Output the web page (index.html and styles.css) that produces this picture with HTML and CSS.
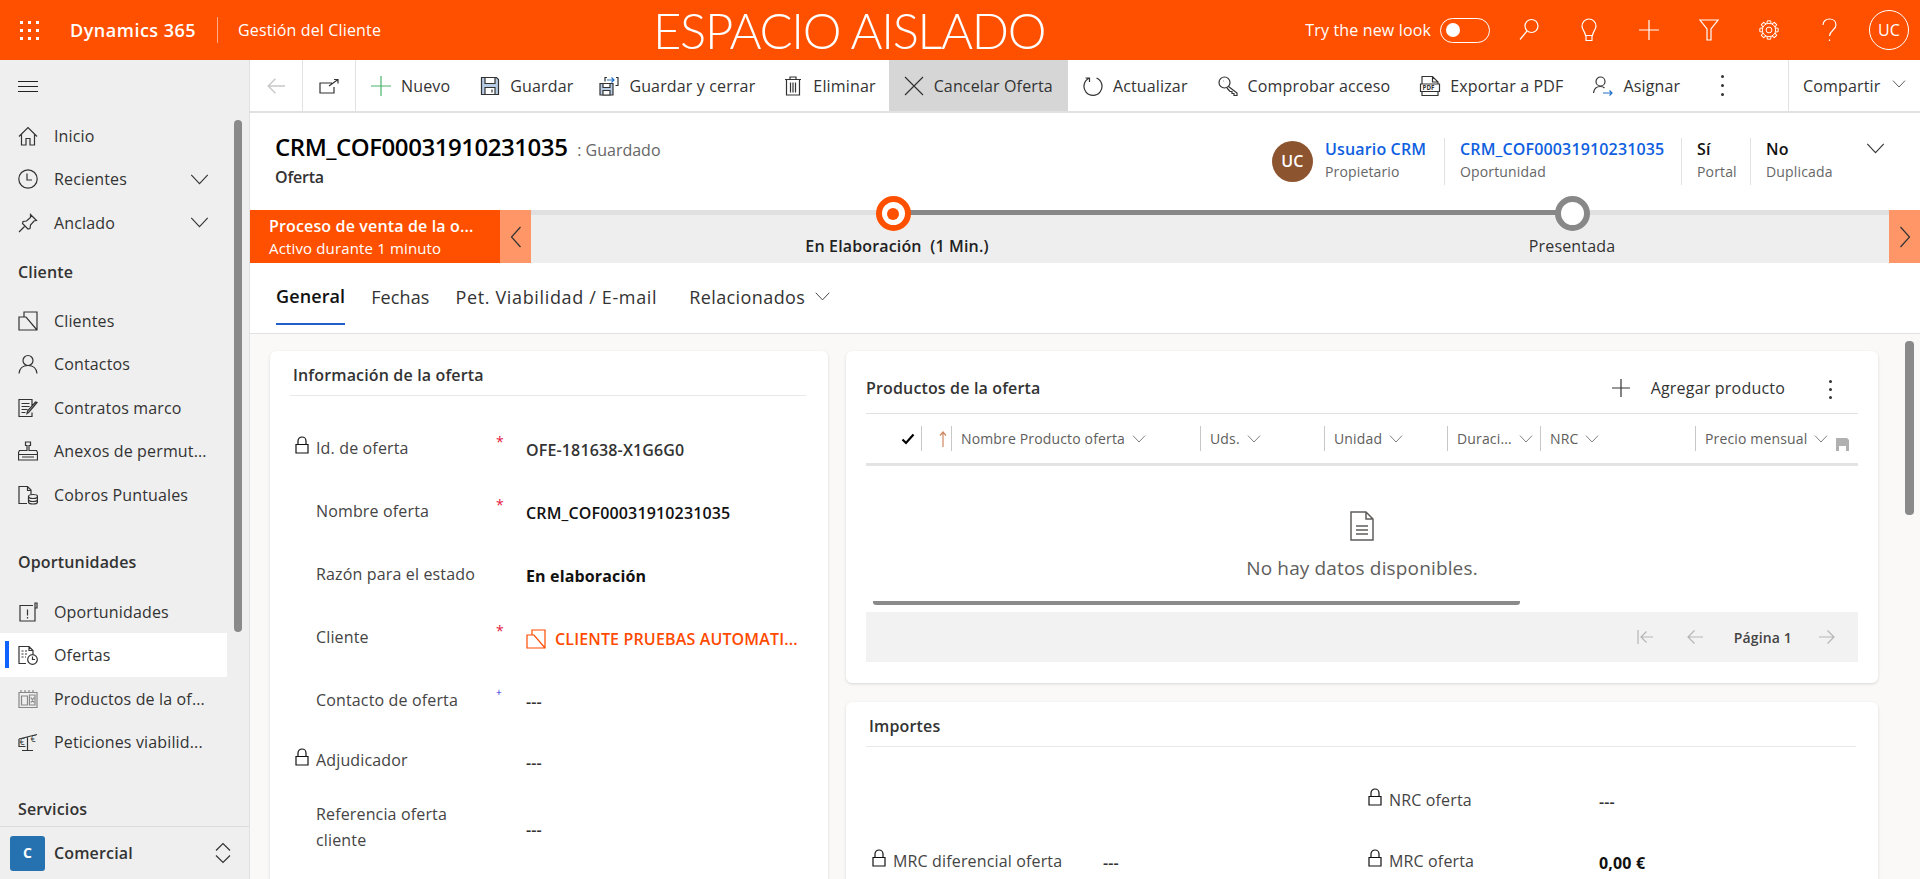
FILE: index.html
```html
<!DOCTYPE html>
<html lang="es">

<head>
    <meta charset="utf-8">
    <title>Oferta: CRM_COF00031910231035 - Dynamics 365</title>
    <link rel="stylesheet" href="styles.css">
</head>

<body>
    <svg class="defs" width="0" height="0">
        <symbol id="i-chev" viewBox="0 0 20 12"><path d="M1 1l9 9.500L19 1"/></symbol>
        <symbol id="i-plus" viewBox="0 0 20 20"><path d="M10 0v20M0 10h20"/></symbol>
        <symbol id="i-home" viewBox="0 0 20 20"><path d="M1 10.500L10 1.500l9 9M3.500 8.500V19h4.500v-6.500h4V19h4.500V8.500"/></symbol>
        <symbol id="i-clock" viewBox="0 0 20 20"><circle cx="10" cy="10" r="9.200"/><path d="M9 4.500V11h5"/></symbol>
        <symbol id="i-pin" viewBox="0 0 20 20"><path d="M12.500 1.500l6 6-2.500 .5-3.500 4-.5 3.500-2 .5-5.500-5.500.5-2 3.500-.5 4-3.500zM7 13L1 19"/></symbol>
        <symbol id="i-account" viewBox="0 0 20 20"><path d="M6 6V1h13v18H1V6h7l11 13"/></symbol>
        <symbol id="i-contact" viewBox="0 0 20 20"><circle cx="10" cy="6.500" r="5"/><path d="M1 19.500c.5-5 4-8 9-8s8.500 3 9 8"/></symbol>
        <symbol id="i-contract" viewBox="0 0 20 20"><path d="M14 7.500V1.500H1V18.500h13v-4M3.500 5.500h8M3.500 8.500h8M3.500 11.500h6M3.500 14.500h4M19 4.500l-8 9.500-2 1.500.5-2.500 8-9z"/></symbol>
        <symbol id="i-stamp" viewBox="0 0 20 20"><path d="M7.500 1h5v3.500h-1.500v5H18.500l1 2V19H.5v-7.500l1-2H9v-5H7.500zM.5 13.500h19M4 16h12"/></symbol>
        <symbol id="i-coins" viewBox="0 0 20 20"><path d="M9 18.500H1V1.500h8.500l3.500 3.500v4.500M9.500 1.500V5.500H13"/><ellipse cx="15" cy="11.500" rx="4.500" ry="2"/><path d="M10.500 11.500v5.500c0 1 2 2 4.500 2s4.500-1 4.500-2v-5.500M10.500 14.500c0 1 2 2 4.500 2s4.500-1 4.500-2"/></symbol>
        <symbol id="i-opp" viewBox="0 0 20 20"><path d="M15 3.500H2V19h15V1h2v5h-2M9.500 7.500v6M9.500 15v1.500"/></symbol>
        <symbol id="i-offer" viewBox="0 0 20 20"><path d="M8 18.500H1V1.500h10l4 4v4M11 1.500v4h4M3.500 6h2M7 6h2M3.500 9h2M7 9h2M3.500 12h2M7 12h1"/><circle cx="14.500" cy="14.500" r="4.800"/><path d="M14.500 11.500v3h2.500"/></symbol>
        <symbol id="i-product" viewBox="0 0 20 20"><path d="M1 3.500h18V18.500H1z"/><path d="M3.500 7h6v9h-6zM11.500 6h5.500v10h-5.500zM13 8.500l3 5M16 8.500l-3 5M3 1v2.500M7 1v2.500M11 1v2.500M15 1v2.500"/></symbol>
        <symbol id="i-lock" viewBox="0 0 14 18"><path d="M1 8.500h12v8.500H1zM3 8.500V5a4 4 0 0 1 8 0v3.500"/></symbol>
        <symbol id="i-save" viewBox="0 0 20 20"><path class="tint" d="M1.500 1.500h15l2 2v15h-17z"/><path class="white" d="M5 1.500h10v6H5zM5 18.500v-7h10v7z"/><path d="M12 13.500v3"/></symbol>
        <symbol id="i-saveclose" viewBox="0 0 20 20"><path class="tint" d="M1 7.500h13V19H1z"/><path class="white" d="M4 7.500h7v4H4zM4 19v-4.500h7V19z"/><path class="blue" d="M8 4h7M12.500 1.500L15 4l-2.500 2.500"/><path d="M6 5.500v-4h2M17 1.500h2v8h-2.500"/></symbol>
        <symbol id="i-trash" viewBox="0 0 20 20"><path d="M2 3.500h16M7 3.500V1h6v2.500M3.500 3.500V19h13V3.500M7.500 6.500v10M10 6.500v10M12.500 6.500v10"/></symbol>
        <symbol id="i-close" viewBox="0 0 20 20"><path d="M1 1l18 18M19 1L1 19"/></symbol>
        <symbol id="i-refresh" viewBox="0 0 20 20"><path d="M6.500 2A9 9 0 1 0 13.500 2M6.500 6V2H2.500"/></symbol>
        <symbol id="i-key" viewBox="0 0 20 20"><circle cx="6.500" cy="6.500" r="5.500"/><path d="M10.500 10.500l8.500 6.500v2.500h-3v-2h-2v-2h-2l-3-3.500M5 5h.5"/></symbol>
        <symbol id="i-assign" viewBox="0 0 20 20"><circle cx="7.500" cy="5.500" r="4.500"/><path d="M.5 17c.5-4 3-6.500 7-6.500 1.500 0 3 .5 4 1.500"/><path class="blue" d="M10 17h9M16.500 14.500L19 17l-2.500 2.500"/></symbol>
        <symbol id="i-doc" viewBox="0 0 24 30"><path d="M1 1h15l7 7v21H1zM16 1v7h7M6 15h12M6 19h12M6 23h12"/></symbol>
        <symbol id="i-first" viewBox="0 0 16 14"><path d="M1 0v14M16 7H4M9.500 1.500L4 7l5.500 5.500"/></symbol>
        <symbol id="i-back" viewBox="0 0 16 14"><path d="M16 7H1M7.500 .5L1 7l6.500 6.500"/></symbol>
        <symbol id="i-next" viewBox="0 0 16 14"><path d="M0 7h15M8.500 .5L15 7l-6.500 6.500"/></symbol>
    </svg>

    <header class="topbar">
        <span class="waffle"><i></i><i></i><i></i><i></i><i></i><i></i><i></i><i></i><i></i></span>
        <span class="brand">Dynamics 365</span>
        <span class="app-name">Gestión del Cliente</span>
        <span class="sandbox">ESPACIO AISLADO</span>
        <div class="top-tools">
            <span class="new-look">Try the new look</span>
            <span class="switch"><i></i></span>
            <svg class="top-ico" viewBox="0 0 20 24"><circle cx="12.500" cy="8" r="6.500"/><path d="M8 13L1 21.500"/></svg>
            <svg class="top-ico" viewBox="0 0 20 24"><path d="M6.500 17.500C6 13 3 12 3 8a7 7 0 0 1 14 0c0 4-3 5-3.500 9.500zM7 17.500V22.500h6v-5"/></svg>
            <svg class="top-ico"><use href="#i-plus"/></svg>
            <svg class="top-ico" viewBox="0 0 20 24"><path d="M1 2h18l-7 9v11h-4V11z"/></svg>
            <svg class="top-ico" viewBox="0 0 24 24">
                <circle cx="12" cy="12" r="3.500"/>
                <circle cx="12" cy="12" r="8"/>
                <path class="tooth" d="M9.500 4.400L10 1h4l.5 3.400"/>
                <path class="tooth" d="M9.500 4.400L10 1h4l.5 3.400" transform="rotate(45 12 12)"/>
                <path class="tooth" d="M9.500 4.400L10 1h4l.5 3.400" transform="rotate(90 12 12)"/>
                <path class="tooth" d="M9.500 4.400L10 1h4l.5 3.400" transform="rotate(135 12 12)"/>
                <path class="tooth" d="M9.500 4.400L10 1h4l.5 3.400" transform="rotate(180 12 12)"/>
                <path class="tooth" d="M9.500 4.400L10 1h4l.5 3.400" transform="rotate(225 12 12)"/>
                <path class="tooth" d="M9.500 4.400L10 1h4l.5 3.400" transform="rotate(270 12 12)"/>
                <path class="tooth" d="M9.500 4.400L10 1h4l.5 3.400" transform="rotate(315 12 12)"/>
            </svg>
            <svg class="top-ico" viewBox="0 0 20 24"><path d="M4 7c0-8 13-8 13 0 0 5-6.500 5.500-6.500 11M10.500 21.500v1.500"/></svg>
            <span class="top-user">UC</span>
        </div>
    </header>

    <div class="shell">
        <nav class="sidenav">
            <div class="nav-scroll">
                <div class="burger"><i></i><i></i><i></i></div>
                <ul class="nav-list first">
                    <li class="nav-item"><svg class="ico"><use href="#i-home"/></svg>Inicio</li>
                    <li class="nav-item"><svg class="ico"><use href="#i-clock"/></svg>Recientes<svg class="nav-chev"><use href="#i-chev"/></svg></li>
                    <li class="nav-item"><svg class="ico"><use href="#i-pin"/></svg>Anclado<svg class="nav-chev"><use href="#i-chev"/></svg></li>
                </ul>
                <h3 class="nav-head">Cliente</h3>
                <ul class="nav-list">
                    <li class="nav-item"><svg class="ico"><use href="#i-account"/></svg>Clientes</li>
                    <li class="nav-item"><svg class="ico"><use href="#i-contact"/></svg>Contactos</li>
                    <li class="nav-item"><svg class="ico"><use href="#i-contract"/></svg>Contratos marco</li>
                    <li class="nav-item"><svg class="ico"><use href="#i-stamp"/></svg>Anexos de permut...</li>
                    <li class="nav-item"><svg class="ico"><use href="#i-coins"/></svg>Cobros Puntuales</li>
                </ul>
                <h3 class="nav-head second">Oportunidades</h3>
                <ul class="nav-list">
                    <li class="nav-item"><svg class="ico"><use href="#i-opp"/></svg>Oportunidades</li>
                    <li class="nav-item active"><svg class="ico"><use href="#i-offer"/></svg>Ofertas</li>
                    <li class="nav-item"><svg class="ico faded"><use href="#i-product"/></svg>Productos de la of...</li>
                    <li class="nav-item"><svg class="ico" viewBox="0 0 20 20"><path d="M1 7L19 2.500M9.500 5v13M4 18.500h11M1 7v7.500h6.500"/><text class="ico-text" x="1.500" y="13" font-size="9">€</text><text class="ico-text" x="12.500" y="10" font-size="9">€</text></svg>Peticiones viabilid...</li>
                </ul>
                <h3 class="nav-head third">Servicios</h3>
            </div>
            <div class="nav-thumb"></div>
            <div class="area-switch">
                <span class="area-tile">C</span>
                <span class="area-name">Comercial</span>
                <svg class="area-chev" viewBox="0 0 18 22"><path d="M2 8.500L9 1.500l7 7M2 13.500l7 7 7-7"/></svg>
            </div>
        </nav>

        <main class="panel">
            <div class="cmdbar">
                <span class="cmd-nav"><svg class="ico pale"><use href="#i-back"/></svg></span>
                <span class="cmd-nav"><svg class="ico" viewBox="0 -3 20 20"><path d="M13 4H1v10h14V8M10 7L19 .5M15 .5h4v4"/></svg></span>
                <button class="cmd"><svg class="ico green"><use href="#i-plus"/></svg>Nuevo</button>
                <button class="cmd tight-a"><svg class="ico"><use href="#i-save"/></svg>Guardar</button>
                <button class="cmd tight-b"><svg class="ico"><use href="#i-saveclose"/></svg>Guardar y cerrar</button>
                <button class="cmd tight-b"><svg class="ico"><use href="#i-trash"/></svg>Eliminar</button>
                <button class="cmd on"><svg class="ico"><use href="#i-close"/></svg>Cancelar Oferta</button>
                <button class="cmd"><svg class="ico"><use href="#i-refresh"/></svg>Actualizar</button>
                <button class="cmd"><svg class="ico"><use href="#i-key"/></svg>Comprobar acceso</button>
                <button class="cmd"><svg class="ico" viewBox="0 0 20 20"><path d="M2 8V.5h10.500L18 6v2M12.500 .5V6H18M2 15.500v4h16v-4M.5 8h19v7.500H.5z"/><text class="ico-text" x="2.500" y="14.300" font-size="6.200" font-weight="700">PDF</text></svg>Exportar a PDF</button>
                <button class="cmd"><svg class="ico"><use href="#i-assign"/></svg>Asignar</button>
                <span class="cmd-more"><i></i><i></i><i></i></span>
                <div class="cmd-share">Compartir<svg class="share-chev"><use href="#i-chev"/></svg></div>
            </div>

            <section class="rec-head">
                <div class="rec-title">
                    <h1>CRM_COF00031910231035 <small>: Guardado</small></h1>
                    <p>Oferta</p>
                </div>
                <div class="rec-fields">
                    <div class="rec-field owner">
                        <span class="avatar">UC</span>
                        <div><a>Usuario CRM</a><span>Propietario</span></div>
                    </div>
                    <div class="rec-field opp"><a>CRM_COF00031910231035</a><span>Oportunidad</span></div>
                    <div class="rec-field portal"><b>Sí</b><span>Portal</span></div>
                    <div class="rec-field dup"><b>No</b><span>Duplicada</span></div>
                    <svg class="rec-chev"><use href="#i-chev"/></svg>
                </div>
            </section>

            <section class="bpf">
                <div class="bpf-name">
                    <b>Proceso de venta de la o...</b>
                    <span>Activo durante 1 minuto</span>
                </div>
                <button class="bpf-arrow"><svg viewBox="0 0 12 22"><path d="M10.500 1L1.500 11l9 10"/></svg></button>
                <div class="bpf-main">
                    <div class="bpf-track"><i class="t-a"></i><i class="t-b"></i><i class="t-c"></i></div>
                    <div class="bpf-stages">
                        <div class="stage current"><i></i><span>En Elaboración&nbsp; (1 Min.)</span></div>
                        <div class="stage"><i></i><span>Presentada</span></div>
                    </div>
                </div>
                <button class="bpf-arrow"><svg viewBox="0 0 12 22"><path d="M1.500 1l9 10-9 10"/></svg></button>
            </section>

            <div class="tabs">
                <span class="tab on">General</span>
                <span class="tab">Fechas</span>
                <span class="tab wide">Pet. Viabilidad / E-mail</span>
                <span class="tab more">Relacionados<svg class="tab-chev"><use href="#i-chev"/></svg></span>
            </div>

            <div class="content">
                <section class="card info">
                    <h2 class="card-title">Información de la oferta</h2>
                    <div class="form-row"><svg class="lock"><use href="#i-lock"/></svg><label>Id. de oferta</label><em class="req">*</em><span class="val">OFE-181638-X1G6G0</span></div>
                    <div class="form-row"><label>Nombre oferta</label><em class="req">*</em><span class="val dark">CRM_COF00031910231035</span></div>
                    <div class="form-row"><label>Razón para el estado</label><span class="val bold">En elaboración</span></div>
                    <div class="form-row"><label>Cliente</label><em class="req">*</em><span class="val link"><svg class="ico"><use href="#i-account"/></svg>CLIENTE PRUEBAS AUTOMATI...</span></div>
                    <div class="form-row"><label>Contacto de oferta</label><em class="req rec">+</em><span class="val">---</span></div>
                    <div class="form-row short"><svg class="lock"><use href="#i-lock"/></svg><label>Adjudicador</label><span class="val">---</span></div>
                    <div class="form-row tall"><label>Referencia oferta cliente</label><span class="val">---</span></div>
                </section>

                <div class="right-col">
                    <section class="card products">
                        <div class="prod-head">
                            <h2>Productos de la oferta</h2>
                            <span class="add-prod"><svg class="plus-two" viewBox="0 0 18 18"><path d="M9 0v18M0 9h18"/></svg>Agregar producto</span>
                            <span class="cmd-more small"><i></i><i></i><i></i></span>
                        </div>
                        <div class="grid-head">
                            <div class="gh check"><svg viewBox="0 0 14 12"><path d="M1.500 6.500l3.500 3.500 7.500-8.500"/></svg></div>
                            <div class="gh sort"><svg viewBox="0 0 8 16"><path d="M4 16V1M1 4.500L4 1l3 3.500"/></svg></div>
                            <div class="gh">Nombre Producto oferta<svg class="gh-chev"><use href="#i-chev"/></svg></div>
                            <div class="gh">Uds.<svg class="gh-chev"><use href="#i-chev"/></svg></div>
                            <div class="gh">Unidad<svg class="gh-chev"><use href="#i-chev"/></svg></div>
                            <div class="gh">Duraci...<svg class="gh-chev"><use href="#i-chev"/></svg></div>
                            <div class="gh">NRC<svg class="gh-chev"><use href="#i-chev"/></svg></div>
                            <div class="gh">Precio mensual<svg class="gh-chev"><use href="#i-chev"/></svg><svg class="gh-save" viewBox="0 0 13 13"><path d="M0 0h11l2 2v11H0zM3 8v5h7V8z"/></svg></div>
                        </div>
                        <div class="grid-empty">
                            <svg class="doc"><use href="#i-doc"/></svg>
                            <p>No hay datos disponibles.</p>
                        </div>
                        <div class="grid-scroll"></div>
                        <div class="grid-foot">
                            <svg class="pg first"><use href="#i-first"/></svg>
                            <svg class="pg prev"><use href="#i-back"/></svg>
                            <b>Página 1</b>
                            <svg class="pg"><use href="#i-next"/></svg>
                        </div>
                    </section>

                    <section class="card amounts">
                        <h2 class="card-title">Importes</h2>
                        <div class="amount-grid">
                            <span></span><span></span><span></span>
                            <svg class="lock"><use href="#i-lock"/></svg><label>NRC oferta</label><span class="val">---</span>
                            <svg class="lock"><use href="#i-lock"/></svg><label>MRC diferencial oferta</label><span class="val">---</span>
                            <svg class="lock"><use href="#i-lock"/></svg><label>MRC oferta</label><span class="val bold">0,00 €</span>
                        </div>
                    </section>
                </div>
            </div>
            <div class="main-thumb"></div>
        </main>
    </div>
</body></html>
```

FILE: styles.css
```css
/****GENERAL****/

* {
    box-sizing: border-box;
}

html,
body {
    height: 100%;
}

body {
    margin: 0;
    overflow: hidden;
    font-family: "Open Sans", "Noto Sans", sans-serif;
    font-size: 16px;
    letter-spacing: 0.15px;
    color: #333;
    background-color: #fff;
}

h1, h2, h3, p, ul {
    margin: 0;
    padding: 0;
}

ul {
    list-style: none;
}

i, em {
    font-style: normal;
}

button {
    font: inherit;
    letter-spacing: inherit;
    color: inherit;
    border: none;
    background: none;
    padding: 0;
}

svg {
    fill: none;
    stroke: currentColor;
    stroke-width: 1.2;
    flex: none;
    overflow: visible;
}

.defs {
    position: absolute;
}

.tint { fill: #b7cde6; }
.white { fill: #fff; }
.blue { stroke: #1f6fc4; }

.ico-text {
    fill: currentColor;
    stroke: none;
    letter-spacing: 0;
}

.ico {
    width: 20px;
    height: 20px;
}

.shell {
    display: flex;
    height: 819px;
}


/****TOPBAR****/

.topbar {
    display: flex;
    align-items: center;
    height: 60px;
    padding-left: 20px;
    background-color: #ff5000;
    color: #fff;
}

.waffle {
    display: grid;
    grid-template-columns: repeat(3, 3px);
    gap: 5px;
    width: 19px;
}

.waffle i {
    width: 3px;
    height: 3px;
    background-color: #fff;
}

.brand {
    margin-left: 31px;
    font-size: 18px;
    font-weight: 600;
    letter-spacing: 0.5px;
    width: 147px;
}

.app-name {
    border-left: 1px solid #ffab85;
    height: 26px;
    line-height: 26px;
    padding-left: 20px;
    width: 436px;
}

.sandbox {
    font-family: Lato, "Open Sans", sans-serif;
    font-size: 49px;
    font-weight: 300;
    line-height: 60px;
    letter-spacing: -1.35px;
    white-space: nowrap;
}

.top-tools {
    display: flex;
    align-items: center;
    margin-left: auto;
    padding-right: 11px;
}

.new-look {
    margin-right: 9px;
}

.switch {
    display: flex;
    align-items: center;
    width: 50px;
    height: 25px;
    padding-left: 5px;
    margin-right: 9px;
    border: 1px solid #fff;
    border-radius: 13px;
}

.switch i {
    width: 14px;
    height: 14px;
    border-radius: 50%;
    background-color: #fff;
}

.top-ico {
    width: 20px;
    height: 24px;
    margin: 0 20px;
}

.top-ico .tooth {
    stroke-linejoin: round;
}

.top-user {
    width: 40px;
    height: 40px;
    margin-left: 10px;
    border: 1px solid #fff;
    border-radius: 50%;
    font-size: 16px;
    line-height: 38px;
    text-align: center;
}


/****SIDENAV****/

.sidenav {
    position: relative;
    display: flex;
    flex-direction: column;
    flex: none;
    width: 250px;
    background-color: #efefef;
    border-right: 1px solid #e1e1e1;
}

.nav-scroll {
    flex: 1;
    overflow: hidden;
    padding-right: 22px;
}

.burger {
    display: flex;
    flex-direction: column;
    gap: 4px;
    width: 20px;
    margin: 21px 0 0 18px;
}

.burger i {
    height: 1px;
    background-color: #222;
}

.nav-list.first {
    margin-top: 22px;
}

.nav-item {
    position: relative;
    display: flex;
    align-items: center;
    height: 43.600px;
    padding-left: 18px;
    white-space: nowrap;
}

.nav-item .ico {
    margin-right: 16px;
}

.ico.faded {
    color: #888;
}

.nav-item.active {
    background-color: #fff;
}

.nav-item.active::before {
    content: "";
    position: absolute;
    left: 5px;
    top: 8px;
    bottom: 9px;
    width: 4px;
    background-color: #0f62fe;
}

.nav-chev {
    width: 19px;
    height: 11px;
    margin-left: auto;
    margin-right: 18px;
}

.nav-head {
    font-size: 16px;
    font-weight: 600;
    height: 27px;
    line-height: 27px;
    padding-left: 18px;
    margin-top: 14px;
    margin-bottom: 13px;
}

.nav-head.second {
    margin-top: 32px;
    margin-bottom: 14px;
}

.nav-head.third {
    margin-top: 32px;
}

.nav-thumb {
    position: absolute;
    left: 234px;
    top: 60px;
    width: 8px;
    height: 512px;
    border-radius: 4px;
    background-color: #8a8a8a;
}

.area-switch {
    display: flex;
    align-items: center;
    height: 53px;
    padding: 0 17px 0 10px;
    border-top: 1px solid #dcdcdc;
    background-color: #efefef;
}

.area-tile {
    width: 35px;
    height: 35px;
    border-radius: 3px;
    background-color: #2672b0;
    color: #fff;
    font-size: 14px;
    font-weight: 700;
    line-height: 33px;
    text-align: center;
}

.area-name {
    margin-left: 9px;
    font-weight: 600;
}

.area-chev {
    width: 18px;
    height: 22px;
    margin-left: auto;
}


/****COMMAND BAR****/

.panel {
    position: relative;
    flex: 1;
    display: flex;
    flex-direction: column;
    min-width: 0;
    overflow: hidden;
}

.cmdbar {
    display: flex;
    align-items: stretch;
    flex: none;
    height: 53px;
    border-bottom: 2px solid #e1e1e1;
}

.cmd-nav {
    display: flex;
    align-items: center;
    justify-content: center;
    width: 53px;
    border-right: 1px solid #e1e1e1;
}

.ico.pale {
    color: #c8c8c8;
    width: 18px;
    height: 16px;
}

.ico.green {
    color: #49b36c;
}

.cmd {
    display: flex;
    align-items: center;
    gap: 10px;
    padding: 0 15px;
    white-space: nowrap;
}

.cmd.tight-a {
    padding-right: 11px;
}

.cmd.tight-b {
    padding-right: 13px;
}

.cmd.on {
    background-color: #d6d6d6;
}

.cmd-more {
    display: flex;
    flex-direction: column;
    align-items: center;
    justify-content: center;
    gap: 6px;
    width: 54px;
}

.cmd-more i {
    width: 3px;
    height: 3px;
    border-radius: 50%;
    background-color: #333;
}

.cmd-share {
    display: flex;
    align-items: center;
    margin-left: auto;
    width: 132px;
    padding-left: 14px;
    border-left: 1px solid #e1e1e1;
}

.share-chev {
    width: 14px;
    height: 8px;
    margin-left: 12px;
    margin-top: -4px;
}


/****RECORD HEADER****/

.rec-head {
    display: flex;
    flex: none;
    justify-content: space-between;
    height: 97px;
    padding: 18px 0 0 25px;
}

.rec-title h1 {
    font-size: 24px;
    font-weight: 600;
    line-height: 32px;
    letter-spacing: -0.45px;
    color: #000;
    white-space: nowrap;
}

.rec-title small {
    font-size: 16px;
    font-weight: 400;
    letter-spacing: 0;
    color: #666;
    margin-left: 4px;
}

.rec-title p {
    font-size: 16px;
    font-weight: 600;
    line-height: 20px;
    letter-spacing: -0.2px;
    margin-top: 1px;
}

.rec-fields {
    display: flex;
    margin-top: 7px;
    height: 47px;
    align-items: stretch;
}

.rec-field {
    display: flex;
    flex-direction: column;
    padding-left: 15px;
    border-left: 1px solid #e1e1e1;
}

.rec-field a,
.rec-field b {
    font-weight: 600;
    line-height: 22px;
    color: #0f5fe0;
    white-space: nowrap;
}

.rec-field b {
    color: #111;
}

.rec-field span {
    font-size: 14px;
    line-height: 24px;
    color: #666;
}

.rec-field.owner {
    flex-direction: row;
    width: 172px;
    padding: 0;
    border: none;
}

.owner div {
    display: flex;
    flex-direction: column;
}

.rec-field span.avatar {
    width: 41px;
    height: 41px;
    margin: 3px 12px 0 0;
    border-radius: 50%;
    background-color: #8c5530;
    color: #fff;
    font-size: 16px;
    font-weight: 600;
    line-height: 41px;
    text-align: center;
}

.rec-field.opp { width: 237px; }
.rec-field.portal { width: 69px; }
.rec-field.dup { width: 116px; }

.rec-chev {
    width: 19px;
    height: 11px;
    margin: 5px 35px 0 0;
}


/****BPF****/

.bpf {
    display: flex;
    flex: none;
    height: 53px;
}

.bpf-name {
    display: flex;
    flex-direction: column;
    justify-content: center;
    width: 250px;
    padding-left: 19px;
    background-color: #ff5000;
    color: #fff;
    white-space: nowrap;
}

.bpf-name b {
    font-size: 16px;
    font-weight: 600;
    line-height: 22px;
}

.bpf-name span {
    font-size: 15px;
    line-height: 22px;
}

.bpf-arrow {
    display: flex;
    align-items: center;
    justify-content: center;
    flex: none;
    width: 31px;
    background-color: #ff9668;
}

.bpf-arrow svg {
    width: 12px;
    height: 22px;
}

.bpf-main {
    flex: 1;
    min-width: 0;
    background-color: #eee;
}

.bpf-track {
    display: flex;
    height: 5px;
}

.t-a { width: 362px; background-color: #e0e0e0; }
.t-b { width: 679px; background-color: #888; }
.t-c { flex: 1; background-color: #e0e0e0; }

.bpf-stages {
    display: flex;
    margin-left: 22.500px;
}

.stage {
    position: relative;
    flex: none;
    width: 679px;
    padding-top: 20px;
    text-align: center;
    line-height: 22px;
}

.stage.current {
    padding-left: 8px;
    font-weight: 600;
    color: #222;
}

.stage i {
    position: absolute;
    left: 322px;
    top: -19px;
    width: 35px;
    height: 35px;
    border: 6px solid #888;
    border-radius: 50%;
    background-color: #fff;
}

.stage.current i {
    border-color: #ff5000;
}

.stage.current i::after {
    content: "";
    position: absolute;
    left: 5.500px;
    top: 5.500px;
    width: 12px;
    height: 12px;
    border-radius: 50%;
    background-color: #ff5000;
}


/****TABS****/

.tabs {
    display: flex;
    flex: none;
    height: 71px;
    padding-left: 26px;
    gap: 26px;
    border-bottom: 1px solid #e1e1e1;
}

.tab {
    display: flex;
    align-items: center;
    height: 62px;
    padding-top: 5px;
    font-size: 18px;
    letter-spacing: 0.1px;
    color: #333;
}

.tab.on {
    font-weight: 600;
    color: #111;
    border-bottom: 2px solid #1f5fc9;
}

.tab.wide {
    letter-spacing: 0.65px;
}

.tab.more {
    margin-left: 6px;
    letter-spacing: 0.4px;
}

.tab-chev {
    width: 15px;
    height: 9px;
    margin-left: 10px;
}


/****CONTENT****/

.content {
    flex: 1;
    display: flex;
    gap: 18px;
    padding: 17px 0 0 20px;
    background-color: #faf9f8;
    overflow: hidden;
}

.card {
    background-color: #fff;
    border-radius: 6px;
    box-shadow: 0 1px 3px rgba(0, 0, 0, 0.14);
}

.card-title {
    height: 45px;
    margin: 0 22px 0 20px;
    padding-left: 3px;
    font-size: 16px;
    font-weight: 600;
    line-height: 48px;
    border-bottom: 1px solid #e8e8e8;
}

.card.info {
    flex: none;
    width: 558px;
    height: 600px;
}

.card.info .card-title {
    margin-bottom: 20px;
}

.lock {
    justify-self: end;
    width: 14px;
    height: 18px;
    margin: -6px 7px 0 0;
    color: #111;
}

label {
    color: #444;
    line-height: 26px;
}

.form-row {
    display: grid;
    grid-template-columns: 46px 183px 27px 1fr;
    align-items: center;
    height: 63px;
}

.form-row label {
    grid-column: 2;
}

.form-row.short {
    height: 58px;
}

.form-row.tall {
    height: 76px;
}

.form-row.tall label {
    max-width: 150px;
}

.req {
    grid-column: 3;
    align-self: center;
    margin: -12px 0 0 -3px;
    color: #e5173f;
    font-size: 14px;
    line-height: 14px;
}

.req.rec {
    color: #2323e0;
    font-size: 10px;
    margin-top: -16px;
}

.val {
    grid-column: 4;
    padding-top: 5px;
    font-weight: 600;
    color: #333;
    white-space: nowrap;
}

.val.dark {
    color: #111;
}

.val.bold {
    font-weight: 700;
    color: #111;
}

.val.link {
    display: flex;
    align-items: center;
    gap: 9px;
    color: #ff4a00;
}


/****PRODUCTS****/

.right-col {
    flex: none;
    width: 1032px;
}

.card.products {
    height: 332px;
    padding: 0 20px;
}

.prod-head {
    display: flex;
    align-items: center;
    height: 63px;
    padding-top: 11px;
    border-bottom: 1px solid #e1e1e1;
}

.prod-head h2 {
    font-size: 16px;
    font-weight: 600;
    margin-right: auto;
}

.add-prod {
    display: flex;
    align-items: center;
    gap: 21px;
    letter-spacing: 0.2px;
}

.plus-two {
    width: 18px;
    height: 18px;
}

.cmd-more.small {
    margin: 3px 9px 0 26px;
    width: 38px;
    gap: 5px;
}

.grid-head {
    display: grid;
    grid-template-columns: 55px 30px 249px 124px 123px 93px 155px 163px;
    align-items: center;
    height: 52px;
    border-bottom: 3px solid #e3e3e3;
    font-size: 14px;
    color: #605e5c;
}

.gh {
    display: flex;
    align-items: center;
    height: 25px;
    padding-left: 9px;
    border-left: 1px solid #c8c8c8;
    white-space: nowrap;
}

.gh.check {
    justify-content: flex-end;
    padding-right: 6px;
    border: none;
    color: #000;
}

.gh.check svg {
    width: 14px;
    height: 12px;
    stroke-width: 2.200;
}

.gh.sort {
    justify-content: flex-end;
    padding-right: 4px;
    color: #d08660;
}

.gh.sort svg {
    width: 8px;
    height: 16px;
}

.gh-chev {
    width: 14px;
    height: 8px;
    margin-left: 7px;
}

.gh-save {
    width: 13px;
    height: 13px;
    margin: 12px 0 0 8px;
    fill: #b0b0b0;
    stroke: none;
}

.grid-empty {
    display: flex;
    flex-direction: column;
    align-items: center;
    height: 135px;
    padding-top: 45px;
}

.doc {
    width: 24px;
    height: 30px;
    color: #605e5c;
    stroke-width: 1.500;
}

.grid-empty p {
    margin-top: 14px;
    font-size: 19px;
    color: #605e5c;
}

.grid-scroll {
    width: 647px;
    height: 4px;
    margin-left: 7px;
    background-color: #8a8a8a;
    border-radius: 0 0 3px 3px;
}

.grid-foot {
    display: flex;
    align-items: center;
    justify-content: flex-end;
    height: 50px;
    margin-top: 7px;
    padding-right: 23px;
    background-color: #f3f2f2;
    font-size: 14px;
    color: #444;
}

.grid-foot b {
    font-weight: 600;
    margin: 0 27px 0 31px;
}

.pg {
    width: 16px;
    height: 14px;
    color: #b5b5b5;
}

.pg.first {
    margin-right: 34px;
}


/****IMPORTES****/

.card.amounts {
    height: 300px;
    margin-top: 19px;
}

.amount-grid {
    display: grid;
    grid-template-columns: 47px 210px 239px 47px 210px 1fr;
    grid-auto-rows: 61px;
    align-items: center;
    margin-top: 22px;
}

.amount-grid .val {
    grid-column: auto;
}

.main-thumb {
    position: absolute;
    right: 6px;
    top: 281px;
    width: 9px;
    height: 174px;
    border-radius: 4px;
    background-color: #8a8a8a;
}
```
